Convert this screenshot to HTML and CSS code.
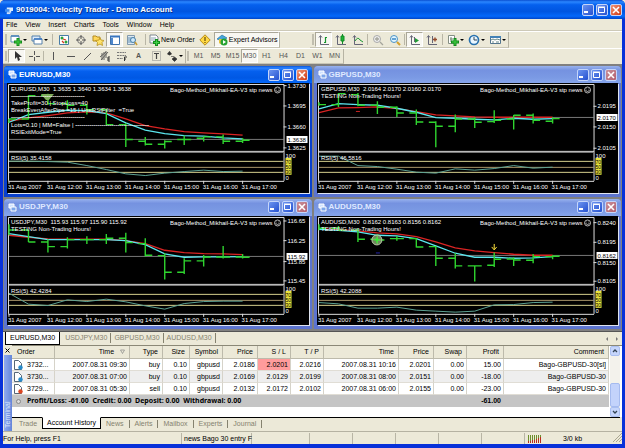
FILE: index.html
```html
<!DOCTYPE html>
<html lang="en">
<head>
<meta charset="utf-8">
<title>9019004: Velocity Trader - Demo Account</title>
<link rel="stylesheet" href="styles.css">
</head>
<body>
<div class="app">
  <header class="titlebar">
    <svg class="app-icon" viewBox="0 0 9 9"><path d="M2 1h7v4H7v2H2z" fill="#d8ecff"/><path d="M0 3h5v3H0z" fill="#3f8df0"/><path d="M2 8h4" stroke="#fff"/></svg>
    <h1>9019004: Velocity Trader - Demo Account</h1>
    <div class="winbtns">
      <button aria-label="Minimize"><svg viewBox="0 0 12 12"><path d="M2 8h4" stroke="#fff" stroke-width="2"/></svg></button>
      <button aria-label="Maximize"><svg viewBox="0 0 12 12"><path d="M2.500 3.500h6v5h-6zM2 3h7" fill="none" stroke="#fff"/></svg></button>
      <button class="close" aria-label="Close"><svg viewBox="0 0 12 12"><path d="M3 3l6 6M9 3l-6 6" stroke="#fff" stroke-width="1.600"/></svg></button>
    </div>
  </header>
  <div class="body">
    <nav class="menu"><a href="#">File</a><a href="#">View</a><a href="#">Insert</a><a href="#">Charts</a><a href="#">Tools</a><a href="#">Window</a><a href="#">Help</a></nav>

    <div class="toolbar-row">
      <div class="toolbar first">
        <i class="grip"></i>
        <button class="drop" aria-label="New chart"><svg viewBox="0 0 12 12"><path d="M1 2h8v6H1z" fill="#fff" stroke="#5d8db5"/><path d="M1 2h8" stroke="#4b83b9" stroke-width="1.500"/><path d="M8 4v8M4 8h8" stroke="#158c1b" stroke-width="3"/><path d="M8 5v6M5 8h6" stroke="#3ed040"/></svg><b></b></button>
        <button class="drop" aria-label="Profiles"><svg viewBox="0 0 12 12"><path d="M1 2h8v5H1z" fill="#dcebfa" stroke="#5580ab"/><path d="M3 5h8v5H3z" fill="#fff" stroke="#5580ab"/><path d="M3 5h8" stroke="#3b79c4" stroke-width="1.500"/></svg><b></b></button>
        <i class="sep"></i>
        <button aria-label="Market Watch"><svg viewBox="0 0 12 12"><path d="M1.500 1.500h9v9h-9z" fill="#fff" stroke="#497da8"/><circle cx="4" cy="4" r="1.500" fill="#28a33a"/><circle cx="8" cy="8" r="1.500" fill="#28a33a"/><path d="M5 5l3 1M4 7l2 2" stroke="#d43820" stroke-width="1.300"/></svg></button>
        <button aria-label="Data window"><svg viewBox="0 0 12 12"><circle cx="6" cy="6" r="3.500" fill="none" stroke="#777"/><path d="M6 1v4M6 7v4M1 6h4M7 6h4" stroke="#555"/></svg></button>
        <button aria-label="Navigator"><svg viewBox="0 0 12 12"><path d="M1 2h3l1 1h3v4H1z" fill="#ffd75a" stroke="#b38b20"/><path d="M8 4l1 2 3 .5-2 2 .5 3L8 10l-3 1.500.5-3-2-2L7 6z" fill="#ffe36b" stroke="#b8901b" stroke-width=".8"/></svg></button>
        <button class="on" aria-label="Terminal"><svg viewBox="0 0 12 12"><path d="M1.500 2.500h9v8h-9z" fill="#fff" stroke="#3e73ae"/><path d="M1 2.500h10" stroke="#3774bf" stroke-width="2"/><path d="M2 4h2v6H2z" fill="#4e87cc"/></svg></button>
        <button aria-label="Strategy tester"><svg viewBox="0 0 12 12"><path d="M1.500 1.500h7v9h-7z" fill="#dbe8f2" stroke="#8199ad"/><path d="M3 3v6M5 3v6" stroke="#6791b3"/><circle cx="7" cy="6" r="2.500" fill="#cee8fa" stroke="#457ea8"/><path d="M9 8l2 3" stroke="#ca9b32" stroke-width="1.500"/></svg></button>
        <i class="sep wide"></i>
        <button class="text"><svg viewBox="0 0 12 12"><path d="M2 1h6l2 2v6H2z" fill="#fff" stroke="#7e8790"/><path d="M3 4h5M3 6h4" stroke="#89a2b2"/><path d="M8.500 5v7M5 8.500h7" stroke="#168f1e" stroke-width="3"/><path d="M8.500 6v5M6 8.500h5" stroke="#40d148"/></svg>New Order</button>
        <button aria-label="MetaEditor"><svg viewBox="0 0 12 12"><path d="M6 .8L11.200 6 6 11.200.8 6z" fill="#ffd945" stroke="#b98d16"/><path d="M6 3v4M6 8v1" stroke="#684909" stroke-width="1.200"/></svg></button>
        <button class="text on"><svg viewBox="0 0 12 12"><path d="M1 5l5-4 5 3-5 3z" fill="#47a4da" stroke="#287aa9" stroke-width=".7"/><path d="M3 5v4c2 2 4 1 5 0V5" fill="#e4c33f"/><circle cx="8" cy="8" r="3.500" fill="#25a232"/><path d="M7 6l3 2-3 2z" fill="#fff"/></svg>Expert Advisors</button>
      </div>
      <div class="toolbar">
        <i class="grip"></i>
        <button class="on" aria-label="Bar chart"><svg viewBox="0 0 12 12"><path d="M2.500 2v8.500H11M1 3.500l1.500-2L4 3.500" fill="none" stroke="#667"/><path d="M7.500 3v6M7 3.500h2M6 8.500h1.500" stroke="#15942b" stroke-width="1.200"/></svg></button>
        <button aria-label="Candlesticks"><svg viewBox="0 0 12 12"><path d="M2.500 2v8.500H11M1 3.500l1.500-2L4 3.500" fill="none" stroke="#667"/><path d="M7.500 0v10" stroke="#108b25"/><path d="M6 2h3v5H6z" fill="#1eb437" stroke="#108b25"/></svg></button>
        <button aria-label="Line chart"><svg viewBox="0 0 12 12"><path d="M2.500 2v8.500H11M1 3.500l1.500-2L4 3.500" fill="none" stroke="#667"/><path d="M3 7q3-5 5-1l3 2" fill="none" stroke="#1a9730"/></svg></button>
        <i class="sep mid"></i>
        <button aria-label="Zoom in"><svg viewBox="0 0 12 12"><circle cx="5" cy="5" r="3.500" fill="#eee" stroke="#aaa"/><path d="M3 5h4M5 3v4M8 8l3 3" stroke="#a5a59c" stroke-width="1.300"/></svg></button>
        <button aria-label="Zoom out"><svg viewBox="0 0 12 12"><circle cx="5" cy="5" r="3.500" fill="#e1f5ff" stroke="#4d93c4"/><path d="M3 5h4" stroke="#2376bb" stroke-width="1.300"/><path d="M8 8l3 3" stroke="#d5a02c" stroke-width="2"/></svg></button>
        <i class="sep mid"></i>
        <button class="on" aria-label="Auto scroll"><svg viewBox="0 0 12 12"><path d="M2.500 2v8.500H11M1 3.500l1.500-2L4 3.500M5.500 3v5" fill="none" stroke="#667"/><path d="M6 4l4 2.500L6 9z" fill="#219b36"/></svg></button>
        <button aria-label="Chart shift"><svg viewBox="0 0 12 12"><path d="M2.500 2v8.500H11M1 3.500l1.500-2L4 3.500M6.500 2v7" fill="none" stroke="#667"/><path d="M7 5.500h4M9 3.500v4" stroke="#944b2c" stroke-width="1.400"/></svg></button>
        <i class="sep"></i>
        <button class="drop" aria-label="Indicators"><svg viewBox="0 0 12 12"><path d="M1.500 1.500h6v8h-6z" fill="#fff" stroke="#858f84"/><path d="M4 3v5M3 5h3" stroke="#71856f"/><path d="M8 4v8M4 8h8" stroke="#12891e" stroke-width="3"/><path d="M8 5v6M5 8h6" stroke="#43cf42"/></svg><b></b></button>
        <button class="drop" aria-label="Periods"><svg viewBox="0 0 12 12"><circle cx="6" cy="6" r="4.500" fill="#eaf7ff" stroke="#2871ae" stroke-width="1.700"/><path d="M6 3v3h3" fill="none" stroke="#345"/></svg><b></b></button>
        <button class="drop" aria-label="Templates"><svg viewBox="0 0 12 12"><path d="M1.500 2.500h10v7h-10z" fill="#fff" stroke="#53758e"/><path d="M1 3h11" stroke="#4482b6" stroke-width="2"/><path d="M2 6l2-1 2 1 2-1 3 1M3 8h2M7 8h3" fill="none" stroke="#688"/></svg><b></b></button>
      </div>
    </div>

    <div class="toolbar-row second">
      <div class="toolbar">
        <i class="grip"></i>
        <button class="on" aria-label="Cursor"><svg viewBox="0 0 12 12"><path d="M4 1v8l2-2 1 4 2-1-1-3h3z" fill="#333"/></svg></button>
        <button aria-label="Crosshair"><svg viewBox="0 0 12 12"><path d="M6.500 1v4M6.500 7v4M1 6.500h4M8 6.500h4" stroke="#555"/></svg></button>
        <i class="sep mid"></i>
        <button aria-label="Vertical line"><svg viewBox="0 0 12 12"><path d="M5.500 2v8" stroke="#555"/></svg></button>
        <button aria-label="Horizontal line"><svg viewBox="0 0 12 12"><path d="M2 6.500h8" stroke="#555"/></svg></button>
        <button aria-label="Trendline"><svg viewBox="0 0 12 12"><path d="M2 10l7-7" stroke="#555"/></svg></button>
        <button aria-label="Channel"><svg viewBox="0 0 12 12"><path d="M1 7l6-5M2 10l7-8M3 3v7M5 2v8M7 1v7" stroke="#555" stroke-width=".9"/><path d="M11 7H9v4h2M9 9h2" fill="none" stroke="#333"/></svg></button>
        <button aria-label="Fibonacci"><svg viewBox="0 0 12 12"><path d="M1 2.500h9M1 5.500h9M1 8.500h6" stroke="#777" stroke-dasharray="2 .7"/><path d="M11 7H8.500v4M8 9h2" fill="none" stroke="#333"/></svg></button>
        <button aria-label="Text" class="glyph">A</button>
        <button aria-label="Label"><svg viewBox="0 0 12 12"><path d="M2.500 1.500h8v9h-8z" fill="none" stroke="#888" stroke-dasharray="1 1"/><path d="M4 3.500h5M6.500 3v6" stroke="#444" stroke-width="1.200"/></svg></button>
        <button class="drop" aria-label="Arrows"><svg viewBox="0 0 12 12"><path d="M1 4l2.500-3L6 4 3.500 5.500z" fill="#333"/><path d="M5 6.500h3M6 9l2.500-2L11 9l-2.500 2.500z" fill="#333" stroke="#333" stroke-width=".6"/></svg><b></b></button>
      </div>
      <div class="toolbar periods">
        <i class="grip"></i>
        <button>M1</button><button>M5</button><button>M15</button><button class="on">M30</button><button>H1</button><button>H4</button><button>D1</button><button>W1</button><button>MN</button>
      </div>
    </div>

    <main class="mdi" id="mdi"></main>

    <nav class="chart-tabs"><a class="current" href="#">EURUSD,M30</a><a href="#">USDJPY,M30</a><a href="#">GBPUSD,M30</a><a href="#">AUDUSD,M30</a><span class="scroll"><i></i><i class="next"></i></span></nav>

    <section class="terminal">
      <div class="side"><button aria-label="Close terminal"><svg viewBox="0 0 5 5"><path d="M.5.5l4 4M4.500.5l-4 4" stroke="#000"/></svg></button><span>Terminal</span></div>
      <div class="panel">
        <div class="table-wrap">
          <table>
            <colgroup><col class="w43"><col class="w75"><col class="w33"><col class="w27"><col class="w33"><col class="w35"><col class="w33"><col class="w33"><col class="w75"><col class="w35"><col class="w33"><col class="w37"><col></colgroup>
            <thead><tr><th class="l">Order</th><th>Time <svg class="sort" viewBox="0 0 5 5"><path d="M.5 1h4l-2 3.500z" fill="none" stroke="#888" stroke-width=".7"/></svg></th><th>Type</th><th>Size</th><th>Symbol</th><th>Price</th><th>S / L</th><th>T / P</th><th>Time</th><th>Price</th><th>Swap</th><th>Profit</th><th>Comment</th></tr></thead>
            <tbody>
              <tr><td class="l"><svg viewBox="0 0 9 10"><path d="M.5.5h4l3 3v6h-7z" fill="#fff" stroke="#567"/><circle cx="6.500" cy="7.500" r="2.200" fill="#278bcb"/></svg>3732...</td><td>2007.08.31 09:30</td><td>buy</td><td>0.10</td><td>gbpusd</td><td>2.0186</td><td class="hit">2.0201</td><td>2.0216</td><td>2007.08.31 10:16</td><td>2.0201</td><td>0.00</td><td>15.00</td><td>Bago-GBPUSD-30[sl]</td></tr>
              <tr><td class="l"><svg viewBox="0 0 9 10"><path d="M.5.5h4l3 3v6h-7z" fill="#fff" stroke="#567"/><circle cx="6.500" cy="7.500" r="2.200" fill="#278bcb"/></svg>3730...</td><td>2007.08.31 07:00</td><td>buy</td><td>0.10</td><td>gbpusd</td><td>2.0169</td><td>2.0129</td><td>2.0199</td><td>2007.08.31 08:00</td><td>2.0151</td><td>0.00</td><td>-18.00</td><td>Bago-GBPUSD-30</td></tr>
              <tr><td class="l"><svg viewBox="0 0 9 10"><path d="M.5.5h4l3 3v6h-7z" fill="#fff" stroke="#567"/><circle cx="6.500" cy="7.500" r="2.200" fill="#dc4520"/></svg>3729...</td><td>2007.08.31 05:30</td><td>sell</td><td>0.10</td><td>gbpusd</td><td>2.0132</td><td>2.0172</td><td>2.0102</td><td>2007.08.31 06:00</td><td>2.0155</td><td>0.00</td><td>-23.00</td><td>Bago-GBPUSD-30</td></tr>
            </tbody>
            <tfoot><tr><td class="l" colspan="11"><svg viewBox="0 0 9 10"><circle cx="4.500" cy="5.500" r="2" fill="#ddd" stroke="#888"/></svg>Profit/Loss: -61.00&nbsp; Credit: 0.00&nbsp; Deposit: 0.00&nbsp; Withdrawal: 0.00</td><td>-61.00</td><td></td></tr></tfoot>
          </table>
          <div class="scrollbar"><button aria-label="Scroll up"><svg viewBox="0 0 8 8"><path d="M2 5l2-2 2 2" fill="none" stroke="#345" stroke-width="1.300"/></svg></button><i></i><button aria-label="Scroll down"><svg viewBox="0 0 8 8"><path d="M2 3l2 2 2-2" fill="none" stroke="#345" stroke-width="1.300"/></svg></button></div>
        </div>
        <nav class="term-tabs"><a href="#">Trade</a><a class="current" href="#">Account History</a><a href="#">News</a><a href="#">Alerts</a><a href="#">Mailbox</a><a href="#">Experts</a><a href="#">Journal</a></nav>
      </div>
    </section>

    <footer class="status">
      <span class="help">For Help, press F1</span><span class="news">news Bago 30 entry F</span><span class="gap"></span><span></span><span></span><span></span><span></span><span></span>
      <span class="conn"><svg viewBox="0 0 15 8"><path d="M.5 0v6M2.500 0v6M4.500 0v5M6.500 0v5M8.500 0v4M10.500 0v3M12.500 0v2" stroke="#6d8f2c"/><path d="M.5 6v2M2.500 6v2M4.500 5v3M6.500 5v3M8.500 4v4M10.500 3v5M12.500 2v6" stroke="#b92c1d"/></svg>3/0 kb</span>
      <svg class="resize" viewBox="0 0 9 9"><path d="M0 9l9-9M3 9l6-6M6 9l3-3" stroke="#aaa791"/></svg>
    </footer>
  </div>
</div>
<script src="charts.js"></script>
</body>
</html>
```

FILE: styles.css
```css
* { box-sizing: border-box; }
body {
  margin: 0;
  font: 7px/8px "Liberation Sans", Arial, sans-serif;
  color: #000;
  background: #ece9d8;
}
a { color: inherit; text-decoration: none; }
button {
  font: inherit; color: inherit; margin: 0; padding: 0;
  border: 1px solid transparent; background: none;
  display: flex; align-items: center; justify-content: center;
}
svg { display: block; flex: none; }
.app {
  min-height: 100vh; display: flex; flex-direction: column;
  background: #0831d9; border-radius: 5px 5px 0 0;
}
.titlebar {
  height: 19px; display: flex; align-items: center; gap: 3px; padding: 1px 3px 0 5px;
  border-radius: 5px 5px 0 0; color: #fff;
  background: linear-gradient(#0a4fd0, #2a86ff 10%, #0560ee 25%, #0055e0 60%, #0468fa 85%, #0145c8);
}
.titlebar h1 { flex: 1; margin: 0; font: bold 8px/10px "Liberation Sans", Arial, sans-serif; text-shadow: 1px 1px #0a318a; }
.app-icon { width: 8px; height: 9px; }
.winbtns { display: flex; gap: 2px; }
.winbtns button {
  width: 12px; height: 12px; border: 1px solid #c4d5fa; border-radius: 2px;
  background: linear-gradient(135deg, #6c94f0, #2450cf);
}
.winbtns svg { width: 12px; height: 12px; }
.winbtns .close { background: linear-gradient(135deg, #f09476, #cf3a14); }
.body { flex: 1; display: flex; flex-direction: column; margin: 0 3px 4px; background: #ece9d8; }

.menu { display: flex; gap: 8px; height: 12px; padding: 1px 3px; border-bottom: 1px solid #cdc9b8; line-height: 9px; }
.toolbar-row { display: flex; height: 17px; border-top: 1px solid #fff; }
.toolbar-row.second { height: 16px; }
.toolbar { display: flex; align-items: stretch; padding: 0 0 0 1px; border-right: 1px solid #b6b3a3; border-bottom: 1px solid #c9c6b5; }
.toolbar.first { margin-right: 30px; }
.toolbar button { width: 17px; }
.toolbar svg { width: 12px; height: 12px; }
.toolbar .on { border-color: #aaa798 #fff #fff #aaa798; background: #f8f7f2; }
.toolbar .drop { width: 21px; gap: 1px; }
.toolbar .drop b { border: 2px solid transparent; border-top-color: #000; border-bottom: 0; }
.toolbar .text { width: auto; gap: 1px; padding: 0 1px; }
.toolbar .glyph { font-weight: bold; color: #555; }
.grip { width: 2px; margin: 2px 1px; border: 1px solid #c1beaf; }
.sep { width: 1px; margin: 2px 2px; background: #b9b6a6; }
.sep.wide { margin-left: 5px; margin-right: 0; }
.sep.mid { margin: 2px 1px; }
.periods { color: #555; padding-left: 0; }

.mdi {
  flex: 1; display: grid; grid-template-columns: 1fr 1fr; gap: 2px 2px;
  padding: 2px 1px 2px; background: #808080;
}
.win { display: flex; flex-direction: column; padding: 0 3px 4px; background: #5c74cf; border-radius: 4px 4px 0 0; overflow: hidden; }
.win header {
  display: flex; align-items: center; gap: 2px; height: 17px; margin: 0 -3px; padding: 0 4px 0 4px;
  color: #dfe8ff; background: linear-gradient(#98b2ee, #7592e0 25%, #7b9ae4 70%, #86a5ec);
}
.win h2 { flex: 1; margin: 0; font: bold 8px/10px "Liberation Sans", Arial, sans-serif; }
.win .doc { width: 9px; height: 9px; }
.win .winbtns .close { background: linear-gradient(135deg, #c99099, #b36070); }
.win.active { background: #0840cd; }
.win.active header { color: #fff; background: linear-gradient(#0a55dc, #2b83ff 12%, #0560ee 30%, #0058e4 70%, #0468fa); }
.win.active .winbtns .close { background: linear-gradient(135deg, #f09476, #cf3a14); }
.chart { width: 100%; flex: 1; min-height: 0; background: #000; box-shadow: 1px 1px #dfe4f0; }
.chart text { font: 6px "Liberation Sans", Arial, sans-serif; fill: #fff; white-space: pre; }
.chart .inverse { fill: #000; }
.chart .tiny { fill: #000; font-size: 5px; }
.chart .rule { font-weight: bold; }
.chart .end { text-anchor: end; }

.chart-tabs { display: flex; height: 14px; padding: 0 2px; border-top: 1px solid #555; color: #85826f; line-height: 11px; }
.chart-tabs a { padding: 0 3px; border-right: 1px solid #85826f; margin: 1px 0 2px; line-height: 9px; }
.chart-tabs .current { margin: 0 2px 0 0; padding: 0 4px; line-height: 11px; color: #000; background: #fff; border: 1px solid #000; border-top: 0; }
.chart-tabs .scroll { margin-left: auto; display: flex; align-items: center; gap: 8px; padding-right: 2px; }
.scroll i { border: 2px solid transparent; border-right-color: #777; border-left: 0; }
.scroll .next { border-right: 0; border-left: 2px solid #777; }

.terminal { display: flex; height: 86px; }
.side { width: 9px; display: flex; flex-direction: column; align-items: center; }
.side button { height: 10px; }
.side svg { width: 5px; height: 5px; }
.side span {
  flex: 1; width: 8px; writing-mode: vertical-rl; transform: rotate(180deg);
  color: #dbe6ff; background: linear-gradient(90deg, #6486d9, #8faaf0); padding-top: 3px;
}
.panel { flex: 1; min-width: 0; display: flex; flex-direction: column; }
.table-wrap { flex: 1; display: flex; align-items: flex-start; background: #fff; border-top: 1px solid #8b8877; padding-right: 2px; }
table { flex: 1; min-width: 0; width: 0; table-layout: fixed; border-collapse: separate; border-spacing: 0; }
th, td { height: 12px; padding: 0 2px; text-align: right; white-space: nowrap; border-right: 1px solid #d6d3c9; border-bottom: 1px solid #e0ddd5; overflow: hidden; }
th { height: 13px; padding: 0 4px 0 3px; font-weight: normal; background: #ece9d8; border-color: #bdbaab; }
.l { text-align: left; }
th.l { padding-left: 5px; }
td.l svg { display: inline-block; vertical-align: middle; width: 9px; height: 10px; margin-right: 4px; }
tbody tr:nth-child(2) { background: #eee; }
tfoot td { font-weight: bold; background: #c5c5c5; border-color: #c5c5c5; }
tfoot .l { font-family: "Noto Sans", sans-serif; }
td.hit { background: #ff9c9c; }
.sort { display: inline-block; width: 5px; height: 5px; margin-left: 4px; }
.w43 { width: 43px; } .w75 { width: 75px; } .w33 { width: 33px; } .w27 { width: 27px; } .w35 { width: 35px; } .w37 { width: 37px; }
.scrollbar { align-self: stretch; width: 10px; margin-left: 1px; display: flex; flex-direction: column; justify-content: space-between; background: #f3f2ec; }
.scrollbar button { height: 10px; background: #c5d5fb; border-color: #aabff0; border-radius: 2px; }
.scrollbar svg { width: 8px; height: 8px; }
.scrollbar i { height: 24px; margin-top: auto; background: #c3d3fb; border: 1px solid #a5bbef; border-radius: 2px; }
.term-tabs { display: flex; height: 14px; color: #85826f; border-top: 1px solid #000; margin-right: 2px; padding-left: 2px; }
.term-tabs a { padding: 0 5px; margin: 2px 0 3px; border-right: 1px solid #85826f; }
.term-tabs a:first-child { border: 0; }
.term-tabs .current { margin: -1px 0 2px; padding: 1px 4px; color: #000; background: #fff; border: 1px solid #000; border-top-color: #fff; }

.status { display: flex; height: 13px; border-top: 1px solid #b5b2a2; padding-top: 1px; line-height: 11px; }
.status span { width: 43px; border-right: 1px solid #b8b5a5; white-space: nowrap; }
.status .help { flex: 1; }
.status .news { width: 70px; padding-left: 2px; }
.status .gap { width: 58px; }
.status .conn { width: 88px; display: flex; align-items: center; gap: 20px; padding-left: 3px; border: 0; }
.conn svg { width: 15px; height: 8px; }
.resize { width: 9px; height: 9px; }
```

FILE: charts.js
```js
// Series values are vertical positions in thirds of a pixel, one for each half-hour bar.
// Bars hold [index, high, low, open, close]; an open or close of 0 draws no tick.
const dashes = `<tspan class="rule">${'-'.repeat(37)}</tspan>`;
const charts = [
  { name: 'EURUSD,M30', active: true, line: 232,
    text: [[79, 'EURUSD,M30  1.3635 1.3640 1.3634 1.3638'], [100, dashes], [121, 'TakeProfit=30 | StopLoss=40'], [142, 'BreakEvenAfterPips =15 | UseRSIFilter  =True'], [163, dashes], [187, 'Lots=0.10 | MM=False | ' + dashes], [208, 'RSIExitMode=True']],
    rsiText: 'RSI(5) 35.4158', price: '1.3638',
    axis: [[68, '1.3730'], [129, '1.3695'], [192, '1.3660'], [255, '1.3625']],
    cyan: [178, 155, 148, 142, 143, 152, 180, 202, 212, 218, 220, 225, 228],
    red: [175, 165, 158, 150, 147, 150, 168, 188, 198, 206, 210, 213, 217],
    rsi: [295, 295, 296, 298, 308, 320, 333, 338, 331, 326, 322, 326, 325],
    bars: [[0, 168, 180, 0, 168], [1, 97, 170, 168, 98], [2, 92, 125, 98, 122], [3, 112, 140, 122, 127], [4, 124, 155, 127, 140], [5, 138, 188, 140, 185], [6, 180, 252, 185, 230], [7, 222, 248, 235, 244], [8, 232, 257, 244, 236], [9, 218, 246, 230, 230], [10, 220, 236, 226, 222], [11, 215, 243, 222, 235], [12, 225, 240, 235, 232]],
    extra: '<path d="M34 11h13l-5 6h-3z" fill="#7fae5c"/>' },
  { name: 'GBPUSD,M30', line: 166,
    text: [[79, 'GBPUSD,M30  2.0164 2.0170 2.0160 2.0170'], [99, 'TESTING Non-Trading Hours!']],
    rsiText: 'RSI(5) 46.5816', price: '2.0170',
    axis: [[130, '2.0195'], [192, '2.0150'], [256, '2.0105']],
    cyan: [138, 122, 125, 127, 136, 148, 164, 166, 169, 171, 166, 169, 167],
    red: [149, 135, 134, 132, 137, 146, 156, 159, 162, 163, 163, 163, 163],
    rsi: [280, 280, 308, 311, 319, 328, 331, 318, 322, 317, 308, 316, 313],
    bars: [[0, 118, 128, 0, 125], [1, 90, 132, 125, 92], [2, 90, 130, 95, 127], [3, 115, 153, 127, 133], [4, 130, 162, 133, 150], [5, 140, 186, 150, 177], [6, 175, 253, 178, 190], [7, 155, 208, 190, 168], [8, 163, 195, 168, 178], [9, 142, 180, 176, 172], [10, 156, 200, 168, 157], [11, 152, 182, 157, 172], [12, 163, 182, 175, 167]],
    extra: '<path d="M39 28.500h4" stroke="#c22"/>' },
  { name: 'USDJPY,M30', line: 184,
    text: [[79, 'USDJPY,M30  115.93 115.97 115.90 115.92'], [99, 'TESTING Non-Trading Hours!']],
    rsiText: 'RSI(5) 42.4284', price: '115.92',
    axis: [[75, '116.65'], [134, '116.25'], [197, '115.85'], [255, '115.45']],
    cyan: [113, 122, 131, 131, 131, 131, 134, 146, 174, 184, 183, 183, 182],
    red: [118, 124, 129, 130, 130, 130, 134, 143, 163, 170, 173, 174, 176],
    rsi: [292, 325, 329, 312, 317, 310, 318, 330, 340, 323, 317, 316, 316],
    bars: [[0, 85, 118, 0, 102], [1, 102, 138, 102, 138], [2, 130, 170, 138, 152], [3, 124, 158, 152, 131], [4, 121, 144, 131, 131], [5, 114, 144, 131, 127], [6, 110, 170, 127, 140], [7, 127, 182, 143, 178], [8, 172, 251, 179, 229], [9, 187, 234, 229, 195], [10, 177, 212, 195, 183], [11, 150, 188, 183, 183], [12, 174, 188, 183, 184]],
    extra: '' },
  { name: 'AUDUSD,M30', line: 181,
    text: [[79, 'AUDUSD,M30  0.8162 0.8163 0.8156 0.8162'], [99, 'TESTING Non-Trading Hours!']],
    rsiText: 'RSI(5) 42.2088', price: '0.8162',
    axis: [[80, '0.8240'], [139, '0.8195'], [200, '0.8150'], [256, '0.8105']],
    cyan: [100, 103, 108, 118, 120, 128, 150, 172, 184, 184, 187, 186, 182],
    red: [98, 101, 105, 111, 114, 122, 138, 156, 165, 170, 175, 178, 178],
    rsi: [320, 324, 337, 337, 334, 343, 346, 349, 346, 327, 326, 320, 319],
    bars: [[0, 85, 103, 0, 97], [1, 90, 104, 97, 103], [2, 97, 138, 103, 130], [3, 115, 145, 130, 132], [4, 120, 134, 128, 128], [5, 127, 155, 128, 153], [6, 150, 210, 152, 187], [7, 172, 218, 187, 210], [8, 210, 257, 210, 210], [9, 170, 213, 208, 190], [10, 184, 210, 189, 192], [11, 174, 202, 193, 182], [12, 178, 190, 182, 181]],
    extra: '<circle cx="60" cy="24" r="5" fill="#8ba873" fill-opacity=".8" stroke="#b8c8a8"/><path d="M57 24h6M60 21v6" stroke="#2f2"/><path d="M59 37h4" stroke="#22a"/><path d="M177.500 28v5M175 31l2.500 3 2.500-3" fill="none" stroke="#ffe23a"/>' }
];

const px = v => v / 3 - 20;
const bx = i => 2 + i * 19.5;
const points = a => a.map((v, i) => bx(i) + ',' + px(v).toFixed(1)).join(' ');
const label = (x, y, s, cls = '') => `<text x="${x}" y="${Math.round(y)}" class="${cls}">${s}</text>`;

function drawChart(c) {
  const parts = [];
  for (const y of [295, 313, 328]) parts.push(`<path d="M2 ${Math.round(px(y)) + .5}H277" stroke="${y === 313 ? '#aa966a' : '#d6d08e'}"/>`);
  parts.push(`<path d="M2 ${Math.round(px(c.line)) - .5}H277" stroke="#777"/>`);
  parts.push('<path d="M1.500 98V1.500H277.500V98M1.500 68.500H277.500M1.500 98.500H277.500" fill="none" stroke="#ddd"/><path d="M2 69.500H277" stroke="#888"/>');
  parts.push(`<polyline points="${points(c.red)}" fill="none" stroke="#d92323" stroke-width="1.3"/>`);
  parts.push(`<polyline points="${points(c.cyan)}" fill="none" stroke="#5ce6ee" stroke-width="1.3"/>`);
  parts.push(`<polyline points="${points(c.rsi)}" fill="none" stroke="#5da394"/>`);
  for (const [i, hi, lo, open, close] of c.bars) {
    let d = `M${bx(i)} ${px(hi)}V${px(lo)}`;
    if (open) d += `M${bx(i)} ${px(open)}h-7`;
    if (close) d += `M${bx(i)} ${px(close)}h7`;
    parts.push(`<path d="${d}" fill="none" stroke="#2fd52f" stroke-width="1.4"/>`);
  }
  parts.push(c.extra);
  for (const [y, s] of c.text) parts.push(label(4, px(y) + 2, s));
  parts.push(label(4, px(286) + 2, c.rsiText));
  parts.push(label(266, 9, 'Bago-Method_Mikhail-EA-V3 stp news', 'end'));
  parts.push('<circle cx="271" cy="7" r="3" fill="none" stroke="#ddd" stroke-width=".8"/><path d="M269 7.500q2 2 4 0M270 6h.5M272 6h.5" fill="none" stroke="#ddd" stroke-width=".8"/>');
  for (const [y, s] of c.axis) parts.push(`<path d="M277 ${px(y)}h3" stroke="#ddd"/>` + label(281, px(y) + 2, s));
  const mark = Math.round(px(c.line));
  parts.push(`<path d="M280 ${mark - 4}h21v7h-21z" fill="#fff"/>` + label(281, mark + 2, c.price, 'inverse'));
  parts.push('<path d="M279 75h6v17h-6z" fill="#e9e43c"/>');
  [[279, '100', ''], [296, '70', 'tiny'], [312, '50', 'tiny'], [328, '30', 'tiny'], [344, '0', '']].forEach(([y, s, k]) => parts.push(label(279, px(y) + 2, s, k)));
  ['31 Aug 2007', '31 Aug 12:00', '31 Aug 13:00', '31 Aug 14:00', '31 Aug 15:00', '31 Aug 16:00', '31 Aug 17:00'].forEach((s, i) =>
    parts.push(`<path d="M${2 + i * 39} 98v3" stroke="#ddd"/>` + label(1 + i * 39, 106, s)));
  return `<svg class="chart" viewBox="0 0 302 109" preserveAspectRatio="xMinYMin meet">${parts.join('')}</svg>`;
}

document.getElementById('mdi').innerHTML = charts.map(c => `
  <section class="win${c.active ? ' active' : ''}">
    <header>
      <svg class="doc" viewBox="0 0 9 9"><path d="M1 1h5v4H1z" fill="#cfe2ff" stroke="#fff"/><path d="M3 4h5v4H3z" fill="#7da7ea" stroke="#fff"/></svg>
      <h2>${c.name}</h2>
      <div class="winbtns">
        <button aria-label="Minimize"><svg viewBox="0 0 12 12"><path d="M2 8h4" stroke="#fff" stroke-width="2"/></svg></button>
        <button aria-label="Maximize"><svg viewBox="0 0 12 12"><path d="M2.500 3.500h6v5h-6zM2 3h7" fill="none" stroke="#fff"/></svg></button>
        <button class="close" aria-label="Close"><svg viewBox="0 0 12 12"><path d="M3 3l6 6M9 3l-6 6" stroke="#fff" stroke-width="1.600"/></svg></button>
      </div>
    </header>
    ${drawChart(c)}
  </section>`).join('');
```
